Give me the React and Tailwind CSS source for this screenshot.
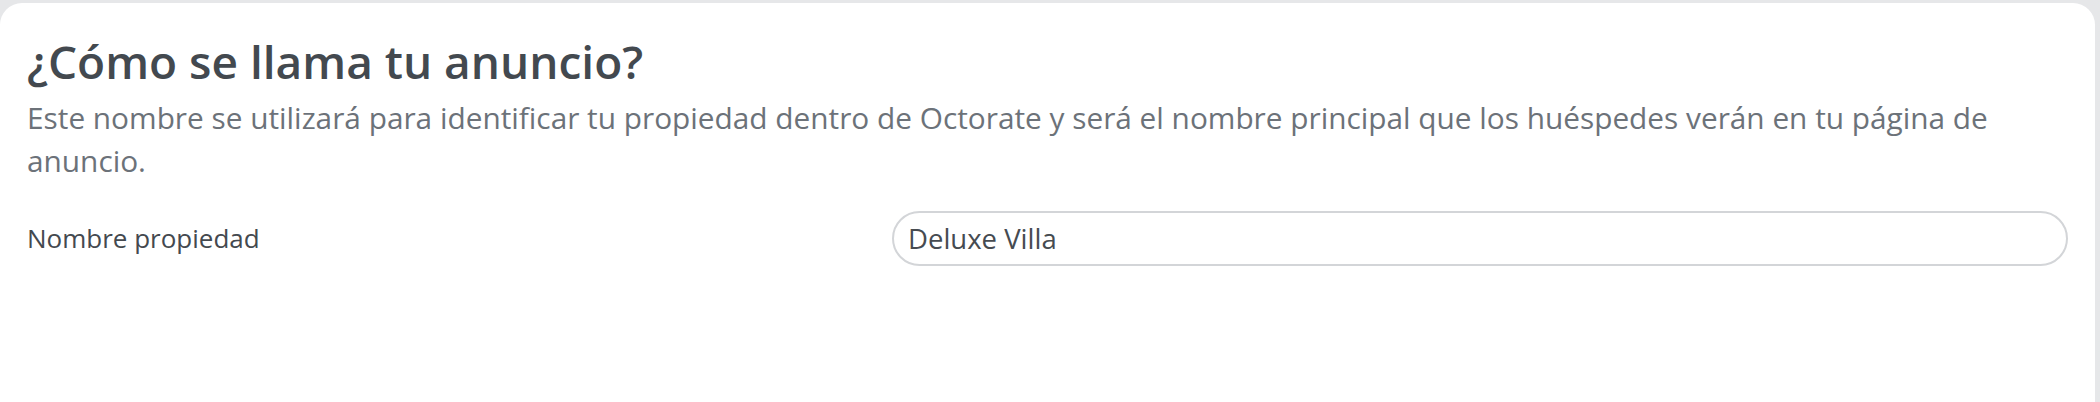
export default function App() {
  return (
    <div className="w-[2100px] h-[402px] bg-[#e6e7e9] pt-[3px] pr-[5px] overflow-hidden" style={{ fontFamily: '"Open Sans", "Noto Sans", sans-serif' }}>
      <div className="h-[420px] bg-white rounded-t-[22px] px-[27px] pt-[31px]">
        <h1 className="text-[46px] leading-[55px] font-semibold text-[#43494f]">¿Cómo se llama tu anuncio?</h1>
        <p className="mt-[7px] text-[29.8px] leading-[43px] text-[#6c7279]">
          Este nombre se utilizará para identificar tu propiedad dentro de Octorate y será el nombre principal que los huéspedes verán en tu página de anuncio.
        </p>
        <div className="mt-[29px] grid grid-cols-[865px_1fr] items-center">
          <label className="text-[26px] text-[#44494f]">Nombre propiedad</label>
          <div className="h-[55px] rounded-full border-2 border-[#d3d5d8] flex items-center px-[14px] text-[27.5px] text-[#464b51]">
            Deluxe Villa
          </div>
        </div>
      </div>
    </div>
  );
}
